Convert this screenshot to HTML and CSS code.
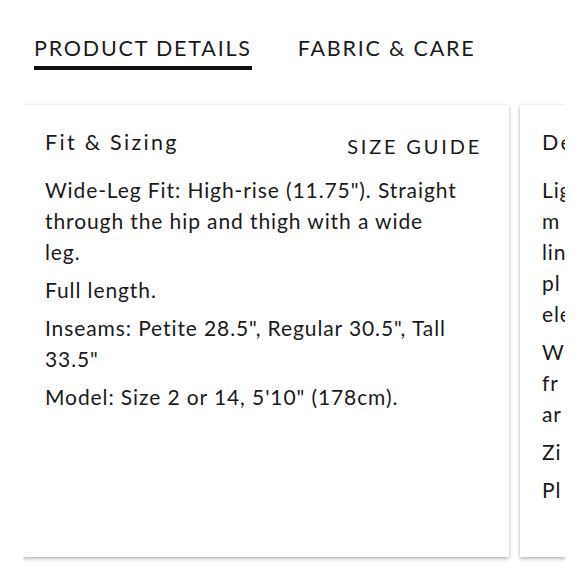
FILE: index.html
```html
<!DOCTYPE html>
<html>
<head>
<meta charset="utf-8">
<link rel="stylesheet" href="styles.css">
</head>
<body>
<nav class="tabs">
  <span class="tab active">PRODUCT DETAILS</span>
  <span class="tab">FABRIC &amp; CARE</span>
</nav>
<div class="scroller">
  <div class="track">
    <section class="card">
      <header class="card-head">
        <h2 class="card-title">Fit &amp; Sizing</h2>
        <span class="size-guide">SIZE GUIDE</span>
      </header>
      <p>Wide-Leg Fit: High-rise (11.75"). Straight through the hip and thigh with a wide leg.</p>
      <p>Full length.</p>
      <p>Inseams: Petite 28.5", Regular 30.5", Tall 33.5"</p>
      <p>Model: Size 2 or 14, 5'10" (178cm).</p>
    </section>
    <section class="card">
      <header class="card-head">
        <h2 class="card-title">Details</h2>
      </header>
      <p>Lig<br>m<br>lin<br>pl<br>ele</p>
      <p>W<br>fr<br>ar</p>
      <p>Zi</p>
      <p>Pl</p>
    </section>
  </div>
</div>
</body>
</html>
```
FILE: styles.css
```css
* { box-sizing: border-box; }
body {
  margin: 0;
  background: #fff;
  color: #1a1a1a;
  font-family: Lato, "Noto Sans", sans-serif;
  width: 580px;
  height: 580px;
  overflow: hidden;
}
.tabs {
  display: flex;
  gap: 46px;
  padding: 36px 0 0 34px;
  font-size: 21.5px;
  letter-spacing: 1.8px;
}
.tab {
  padding-bottom: 6px;
  border-bottom: 4px solid transparent;
  line-height: 24px;
}
.tab.active { border-bottom-color: #111; }
.scroller {
  margin-top: 33px;
  margin-left: 23px;
  width: 542px;
  overflow: hidden;
  padding: 2px 0 25px;
}
.track {
  display: flex;
  gap: 11px;
}
.card {
  flex: 0 0 486px;
  height: 452px;
  background: #fff;
  box-shadow: 0 2px 4px rgba(0,0,0,0.25), 0 0 2px rgba(0,0,0,0.12);
  padding: 23px 27px 0 22px;
}
.card-head {
  display: flex;
  justify-content: space-between;
  align-items: flex-start;
  height: 32px;
  margin-bottom: 14px;
}
.card-title {
  margin: 0;
  font-weight: 400;
  font-size: 21.5px;
  letter-spacing: 2.3px;
  line-height: 28px;
}
.size-guide {
  font-size: 20px;
  letter-spacing: 2.8px;
  line-height: 28px;
  margin-top: 4px;
}
.card p {
  max-width: 415px;
  margin: 0 0 7px;
  font-size: 21px;
  letter-spacing: 0.9px;
  line-height: 31px;
}
```
